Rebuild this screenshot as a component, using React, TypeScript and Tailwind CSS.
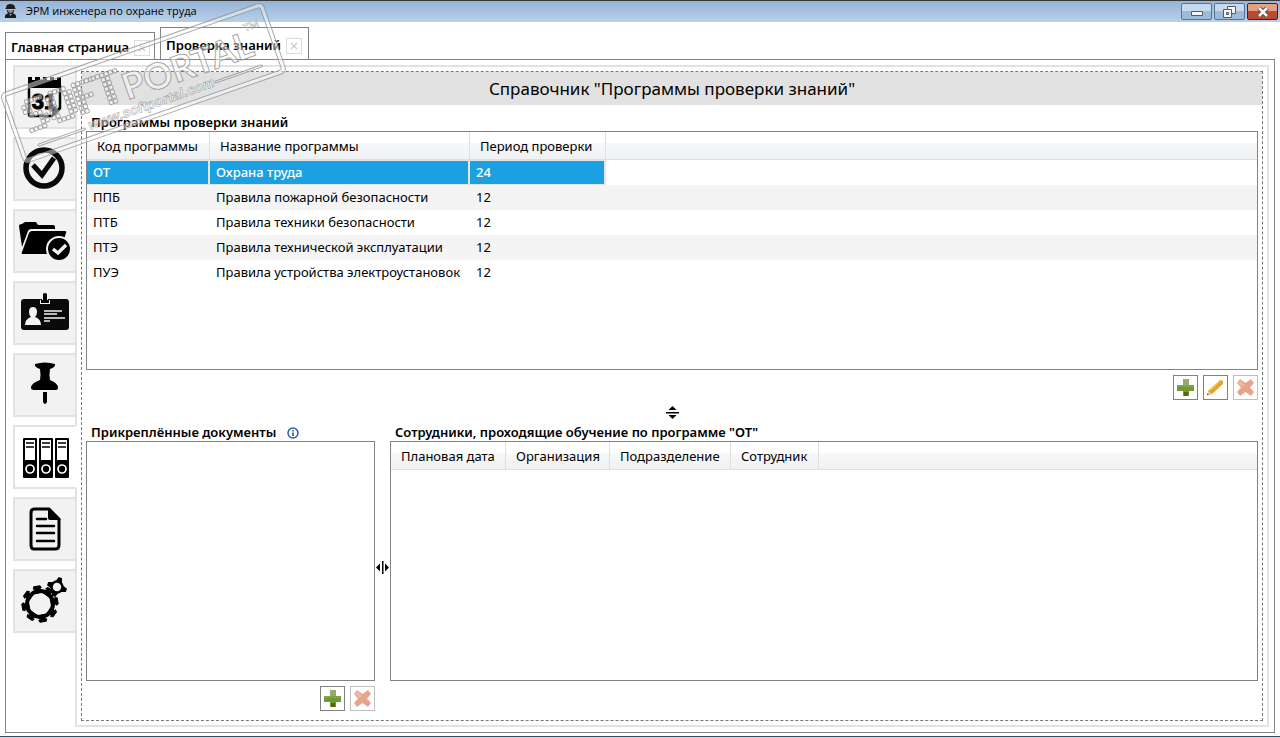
import type { ReactNode } from 'react';

interface Program {
  code: string;
  title: string;
  period: number;
}

const PROGRAMS: Program[] = [
  { code: 'ОТ', title: 'Охрана труда', period: 24 },
  { code: 'ППБ', title: 'Правила пожарной безопасности', period: 12 },
  { code: 'ПТБ', title: 'Правила техники безопасности', period: 12 },
  { code: 'ПТЭ', title: 'Правила технической эксплуатации', period: 12 },
  { code: 'ПУЭ', title: 'Правила устройства электроустановок', period: 12 },
];

function CalendarIcon() {
  return (
    <>
      <path d="M15 12h4v3h3v-3h5v3h3v-3h4v3h3v-3h4v3h3v-3h4v11H15z" />
      <path d="M16 20v30q0 1 1 1h22l8-8V20" fill="none" stroke="#000" strokeWidth="2.5" />
      <path d="M39 52v-8h9z" />
      <text x="31" y="44" textAnchor="middle" fontSize="22" fontWeight="700" fontFamily="Liberation Sans" stroke="#000">
        31
      </text>
    </>
  );
}

function CheckIcon() {
  return (
    <g fill="none" stroke="#0a0a0a">
      <circle cx="31" cy="31" r="18" strokeWidth="5.5" />
      <path d="M20 28l9 10 12-17" strokeWidth="5" />
    </g>
  );
}

function FolderIcon() {
  return (
    <>
      <path d="M6 17q0-2 3-2l3-2h11l2 3h15q2 0 2 2v2H18q-2 0-3 2L9 38z" />
      <path d="M19 22h33q2 0 1 2l-7 21H10q-2 0-1-2l7-19q1-2 3-2z" />
      <circle cx="46" cy="40" r="12" stroke="#f2f2f2" strokeWidth="2" />
      <path d="M40 40l5 4 8-8" fill="none" stroke="#f2f2f2" strokeWidth="3.5" />
    </>
  );
}

function BadgeIcon() {
  return (
    <>
      <rect x="8" y="18" width="48" height="31" rx="3" fill="#0a0a0a" />
      <path d="M29 17h6v2h2v4H27v-4h2z" fill="#f2f2f2" />
      <path d="M30 13q2-2 4 0v6h2v3h-8v-3h2z" />
      <path d="M20 26q4 0 4 5 0 3-2 5 6 2 6 8H12q0-6 6-8-2-2-2-5 0-5 4-5z" fill="#f2f2f2" />
      <path d="M31 30h18M31 33h13M31 37h21M31 40h6" stroke="#f2f2f2" strokeWidth="1.5" />
    </>
  );
}

function PinIcon() {
  return (
    <>
      <path d="M22 11q10-3 20 0 1 3-5 5-1 6 0 11 8 3 8 8 0 2-3 2H22q-4 0-4-2 0-5 9-8 1-5 0-11-6-2-5-5z" />
      <path d="M30 39h4v10q-2 4-4 0z" />
    </>
  );
}

function BindersIcon() {
  return (
    <>
      {[10, 26, 42].map((x) => (
        <g key={x}>
          <rect x={x} y="13" width="14" height="40" rx="1" />
          <rect x={x + 2} y="15" width="10" height="20" fill="#fff" />
          <path d={`M${x + 3} 18h8M${x + 3} 22h8`} stroke="#000" strokeWidth="1.5" />
          <circle cx={x + 7} cy="44" r="4" fill="#000" stroke="#fff" strokeWidth="1.7" />
        </g>
      ))}
    </>
  );
}

function DocumentIcon() {
  return (
    <>
      <path d="M21 12h15l10 10v26q0 4-4 4H21q-3 0-3-4V16q0-4 3-4z" fill="none" stroke="#000" strokeWidth="3" />
      <path d="M35 11l13 12H37q-2 0-2-2z" />
      <path d="M24 22h9M24 29h17M24 36h17M24 44h17" stroke="#000" strokeWidth="2.5" strokeLinecap="round" />
    </>
  );
}

function GearsIcon() {
  return (
    <>
      <circle cx="27" cy="35" r="13" fill="none" stroke="#000" strokeWidth="4" />
      {[-10, 35, 80, 125, 170, 215, 260, 305].map((a) => (
        <path key={a} d="M-4-11L-2-15-4-16-3-18H3L4-16 2-15 4-11z" stroke="#000" transform={`translate(27 35) rotate(${a + 90})`} />
      ))}
      <circle cx="44" cy="18" r="5.500" fill="#f2f2f2" stroke="#000" strokeWidth="2.5" />
      {[-70, 20, 110, 200].map((a) => (
        <path key={a} d="M-2-6h4l-1-3h-2z" stroke="#000" strokeWidth="2" transform={`translate(44 18) rotate(${a + 90})`} />
      ))}
    </>
  );
}

const SECTIONS: { label: string; icon: ReactNode }[] = [
  { label: 'Календарь', icon: <CalendarIcon /> },
  { label: 'Задачи', icon: <CheckIcon /> },
  { label: 'Папки', icon: <FolderIcon /> },
  { label: 'Сотрудники', icon: <BadgeIcon /> },
  { label: 'Закреплённые', icon: <PinIcon /> },
  { label: 'Справочники', icon: <BindersIcon /> },
  { label: 'Отчёты', icon: <DocumentIcon /> },
  { label: 'Настройки', icon: <GearsIcon /> },
];

const ACTIVE_SECTION = 5;

function TitleBar() {
  const frame = 'flex h-[17px] w-[31px] items-center justify-center rounded-xs border';
  return (
    <header className="flex h-[22px] items-center border-t border-[#3a3a3a] bg-linear-to-b from-[#96b4d6] to-[#b8d0ea] pr-0.5 pl-1">
      <svg width="13" height="15" viewBox="0 0 13 15" className="shrink-0">
        <path d="M2 4q0-4 4.500-4T11 4l1 1H1zM3 6h7q0 4-3.500 4T3 6z" fill="#1c1c1c" />
        <path d="M4 6h5q0 3-2.500 3T4 6z" fill="#8a8f96" />
        <path d="M1 14q-1-4 4-5l1.500 3L8 9q5 1 4 5z" fill="#1c1c1c" />
      </svg>
      <span className="ml-[9px] grow font-['Open_Sans','Noto_Sans',sans-serif] text-[11px] text-black">
        ЭРМ инженера по охране труда
      </span>
      <div className="flex gap-0.5">
        <button aria-label="Свернуть" className={`${frame} border-[#5c7391] bg-linear-to-b from-[#c6d9ee] from-50% to-[#9dbad9] to-50%`}>
          <svg width="12" height="8" viewBox="0 0 12 8">
            <path d="M.5 3.500h11v4H.5z" fill="#f4f4f4" stroke="#555b66" />
          </svg>
        </button>
        <button aria-label="Восстановить" className={`${frame} border-[#5c7391] bg-linear-to-b from-[#c6d9ee] from-50% to-[#9dbad9] to-50%`}>
          <svg width="13" height="12" viewBox="0 0 13 12" fill="#f4f4f4" stroke="#555b66">
            <path d="M4.500.5h8v7h-8z" />
            <path d="M.5 3.500h8v8h-8z" />
            <path d="M3.500 6.500h2v2h-2z" fill="#9dbad9" />
          </svg>
        </button>
        <button aria-label="Закрыть" className={`${frame} border-[#5a1620] bg-linear-to-b from-[#e2a183] from-50% to-[#b94b32] to-50%`}>
          <svg width="12" height="10" viewBox="0 0 12 10">
            <path d="M2 1l8 8M10 1L2 9" stroke="#554a4a" strokeWidth="4.500" />
            <path d="M2 1l8 8M10 1L2 9" stroke="#f4f4f4" strokeWidth="2.500" />
          </svg>
        </button>
      </div>
    </header>
  );
}

function PageTab({ title, active }: { title: string; active?: boolean }) {
  const size = active ? '-mb-px h-[33px] w-[149px] border-b border-b-white pt-1' : 'h-[27px] w-[150px] pt-1';
  return (
    <div className={`flex shrink-0 items-center gap-[5px] border-x border-t border-[#828282] bg-white pl-[5px] ${size}`}>
      <button role="tab" aria-selected={!!active} className="text-[13px] font-semibold whitespace-nowrap">
        {title}
      </button>
      <button aria-label="Закрыть вкладку" className="flex size-4 shrink-0 items-center justify-center border border-[#dcdcdc]">
        <svg width="8" height="8" viewBox="0 0 8 8">
          <path d="M1 1l6 6M7 1L1 7" stroke="#cfcfcf" strokeWidth="1.500" />
        </svg>
      </button>
    </div>
  );
}

function PlusIcon() {
  return (
    <svg width="17" height="17" viewBox="0 0 17 17">
      <path d="M6 0h6v6h5v6h-5v5H6v-5H0V6h6z" fill="#6f9a35" />
      <path d="M6 0h6v6H6z" fill="#94ab70" />
      <path d="M0 6h17v2H0z" fill="#7ea548" />
      <path d="M7 13h4v4H7z" fill="#5d6410" />
    </svg>
  );
}

function PencilIcon() {
  return (
    <svg width="17" height="17" viewBox="0 0 17 17">
      <path d="M1 12L13 1l3 1v3L5 15l-4 1z" fill="#e6a423" />
      <path d="M3 11L13 2" stroke="#f3c768" strokeWidth="1.500" />
      <path d="M1 12l4 3-4 1z" fill="#e8cfa0" />
      <path d="M0 14l2 2H0z" fill="#44543f" />
    </svg>
  );
}

function CrossIcon() {
  return (
    <svg width="17" height="17" viewBox="0 0 17 17">
      <path d="M3 0l5.500 4L14 0l3 4-4 4.500L17 13l-3 4-5.500-4L3 17l-3-4 4-4.500L0 4z" fill="#e6a58a" />
      <path d="M3 1l5 5-2 2-5-4z" fill="#eeb99c" />
    </svg>
  );
}

function ToolButton({ label, disabled, children }: { label: string; disabled?: boolean; children: ReactNode }) {
  return (
    <button
      aria-label={label}
      disabled={disabled}
      className={`flex size-[25px] items-center justify-center border bg-white ${disabled ? 'border-[#c0c0c0]' : 'border-[#828282]'}`}
    >
      {children}
    </button>
  );
}

function HeaderCell({ children }: { children?: ReactNode }) {
  return (
    <th className="h-7 border-r border-b border-[#dfdfdf] bg-linear-to-b from-white from-40% via-[#f7f8f9] via-40% to-[#f0f1f3] pt-[3px] pl-[10px] text-left font-normal whitespace-nowrap last:border-r-0">
      {children}
    </th>
  );
}

function ProgramsTable() {
  return (
    <div className="min-h-[160px] flex-1 border border-[#828282]">
      <table className="w-full table-fixed border-separate border-spacing-0 text-[13px]">
        <colgroup>
          <col className="w-[123px]" />
          <col className="w-[260px]" />
          <col className="w-[136px]" />
          <col />
        </colgroup>
        <thead>
          <tr>
            <HeaderCell>Код программы</HeaderCell>
            <HeaderCell>Название программы</HeaderCell>
            <HeaderCell>Период проверки</HeaderCell>
            <HeaderCell />
          </tr>
        </thead>
        <tbody>
          {PROGRAMS.map((p, i) => {
            const selected = i === 0;
            const cell = selected
              ? 'h-[25px] border-r-2 border-y border-[#e6e6e6] bg-[#1ba1e2] pl-1.5 font-medium text-white'
              : 'h-[25px] pl-1.5 whitespace-nowrap';
            return (
              <tr key={p.code} className={i % 2 ? 'bg-[#f4f4f4]' : 'bg-white'}>
                <td className={cell}>{p.code}</td>
                <td className={cell}>{p.title}</td>
                <td className={cell}>{p.period}</td>
                <td />
              </tr>
            );
          })}
        </tbody>
      </table>
    </div>
  );
}

function EmployeesTable() {
  return (
    <div className="flex-1 border border-[#828282]">
      <table className="w-full table-fixed border-separate border-spacing-0 text-[13px]">
        <colgroup>
          <col className="w-[115px]" />
          <col className="w-[104px]" />
          <col className="w-[121px]" />
          <col className="w-[88px]" />
          <col />
        </colgroup>
        <thead>
          <tr>
            <HeaderCell>Плановая дата</HeaderCell>
            <HeaderCell>Организация</HeaderCell>
            <HeaderCell>Подразделение</HeaderCell>
            <HeaderCell>Сотрудник</HeaderCell>
            <HeaderCell />
          </tr>
        </thead>
      </table>
    </div>
  );
}

function PanelTitle({ children }: { children: ReactNode }) {
  return (
    <h2 className="flex h-[17px] items-center gap-[11px] pl-[5px] text-[13px] font-semibold">
      {children}
    </h2>
  );
}

const DOT_LETTERS = [
  ['.####', '##...', '##...', '.###.', '...##', '...##', '####.'],
  ['.####.', '##..##', '##..##', '##..##', '##..##', '##..##', '.####.'],
  ['#####', '##...', '##...', '####.', '##...', '##...', '##...'],
  ['######', '..##..', '..##..', '..##..', '..##..', '..##..', '..##..'],
];

const DOT_OFFSETS = [16, 41, 70, 91];

function Stamp() {
  return (
    <svg
      className="pointer-events-none absolute top-0 left-0 z-20 select-none"
      width="300"
      height="170"
      viewBox="0 0 300 170"
      fill="#fff"
      fillOpacity="0.45"
      stroke="#8c8c8c"
      strokeOpacity="0.75"
      strokeWidth="1"
    >
      <g transform="translate(0 94) rotate(-19.3)">
        <path
          fillRule="evenodd"
          d="M6 0h266q6 0 6 6v62q0 6-6 6H6q-6 0-6-6V6q0-6 6-6zM6 4q-2 0-2 2v62q0 2 2 2h266q2 0 2-2V6q0-2-2-2z"
        />
        {DOT_LETTERS.map((rows, n) =>
          rows.map((row, y) =>
            row.split('').map((c, x) =>
              c === '#' ? (
                <rect key={`${n}-${y}-${x}`} x={DOT_OFFSETS[n] + x * 4.6} y={14 + y * 4.8} width="4" height="4" rx="1" />
              ) : null,
            ),
          ),
        )}
        <text x="118" y="48" fontSize="36" fontWeight="700" fontFamily="Lato">
          PORTAL
        </text>
        <text x="252" y="22" fontSize="10" fontWeight="700" fontFamily="Lato" strokeWidth="0.5">
          TM
        </text>
        <text x="73" y="64" fontSize="14" fontWeight="700" fontStyle="italic" fontFamily="Liberation Sans" strokeWidth="0.6">
          www.softportal.com
        </text>
        <rect x="19" y="60" width="50" height="2" rx="1" />
        <rect x="207" y="59" width="50" height="2" rx="1" />
      </g>
    </svg>
  );
}

export default function App() {
  return (
    <div className="relative flex min-h-screen flex-col bg-white font-['Noto_Sans','Open_Sans',sans-serif] text-black">
      <TitleBar />

      <div role="tablist" className="mt-[5px] flex items-end gap-[5px] px-[5px]">
        <PageTab title="Главная страница" />
        <PageTab title="Проверка знаний" active />
      </div>

      <main className="mx-[5px] flex flex-1 border border-[#828282] py-[5px] pr-[5px] pl-[7px]">
        <nav className="z-10 -mr-0.5 flex w-16 shrink-0 flex-col gap-2">
          {SECTIONS.map((s, i) => (
            <button
              key={s.label}
              aria-label={s.label}
              className={`h-16 border-2 border-[#e2e2e2] ${i === ACTIVE_SECTION ? 'border-r-white bg-white' : 'bg-[#f2f2f2]'}`}
            >
              <svg viewBox="2 2 60 60" className="size-full">
                {s.icon}
              </svg>
            </button>
          ))}
        </nav>

        <div className="flex min-w-0 flex-1 border-2 border-[#e2e2e2] p-1">
          <section className="flex min-w-0 flex-1 flex-col border border-dashed border-[#777]">
            <h1 className="h-[33px] bg-[#e1e1e1] text-center text-[17px] leading-[33px]">
              Справочник "Программы проверки знаний"
            </h1>

            <div className="flex flex-1 flex-col px-1 pt-[9px] pb-[9px]">
              <PanelTitle>Программы проверки знаний</PanelTitle>
              <ProgramsTable />
              <div className="mt-[5px] flex justify-end gap-[5px]">
                <ToolButton label="Добавить программу">
                  <PlusIcon />
                </ToolButton>
                <ToolButton label="Изменить программу">
                  <PencilIcon />
                </ToolButton>
                <ToolButton label="Удалить программу" disabled>
                  <CrossIcon />
                </ToolButton>
              </div>

              <div className="flex h-6 items-center justify-center">
                <svg width="13" height="13" viewBox="0 0 13 13">
                  <path d="M6.500 0l4 4h-8zM6.500 13l4-4h-8zM0 6h13v1.500H0z" />
                </svg>
              </div>

              {/* basis covers the title and the tool row, so both lists share the height evenly */}
              <div className="flex flex-[1_1_50px]">
                <div className="flex w-[289px] shrink-0 flex-col">
                  <PanelTitle>
                    Прикреплённые документы
                    <svg width="12" height="12" viewBox="0 0 12 12" className="shrink-0">
                      <circle cx="6" cy="6" r="5" fill="#fff" stroke="#1f5fb5" strokeWidth="1.500" />
                      <path d="M6 3v1.500M6 5.500V9" stroke="#222" strokeWidth="1.300" />
                    </svg>
                  </PanelTitle>
                  <div className="flex-1 border border-[#828282]" />
                  <div className="mt-[5px] flex justify-end gap-[5px]">
                    <ToolButton label="Добавить документ">
                      <PlusIcon />
                    </ToolButton>
                    <ToolButton label="Удалить документ" disabled>
                      <CrossIcon />
                    </ToolButton>
                  </div>
                </div>

                <div className="flex w-[15px] shrink-0 items-center justify-center">
                  <svg width="13" height="13" viewBox="0 0 13 13">
                    <path d="M0 6.500l4-4v8zM13 6.500l-4-4v8zM6 0h1.500v13H6z" />
                  </svg>
                </div>

                <div className="flex min-w-0 flex-1 flex-col pb-[30px]">
                  <PanelTitle>Сотрудники, проходящие обучение по программе "ОТ"</PanelTitle>
                  <EmployeesTable />
                </div>
              </div>
            </div>
          </section>
        </div>
      </main>

      <footer className="mt-[3px] h-0.5 border-t border-[#3f4d63] bg-[#c3d3e6]" />
      <Stamp />
    </div>
  );
}
